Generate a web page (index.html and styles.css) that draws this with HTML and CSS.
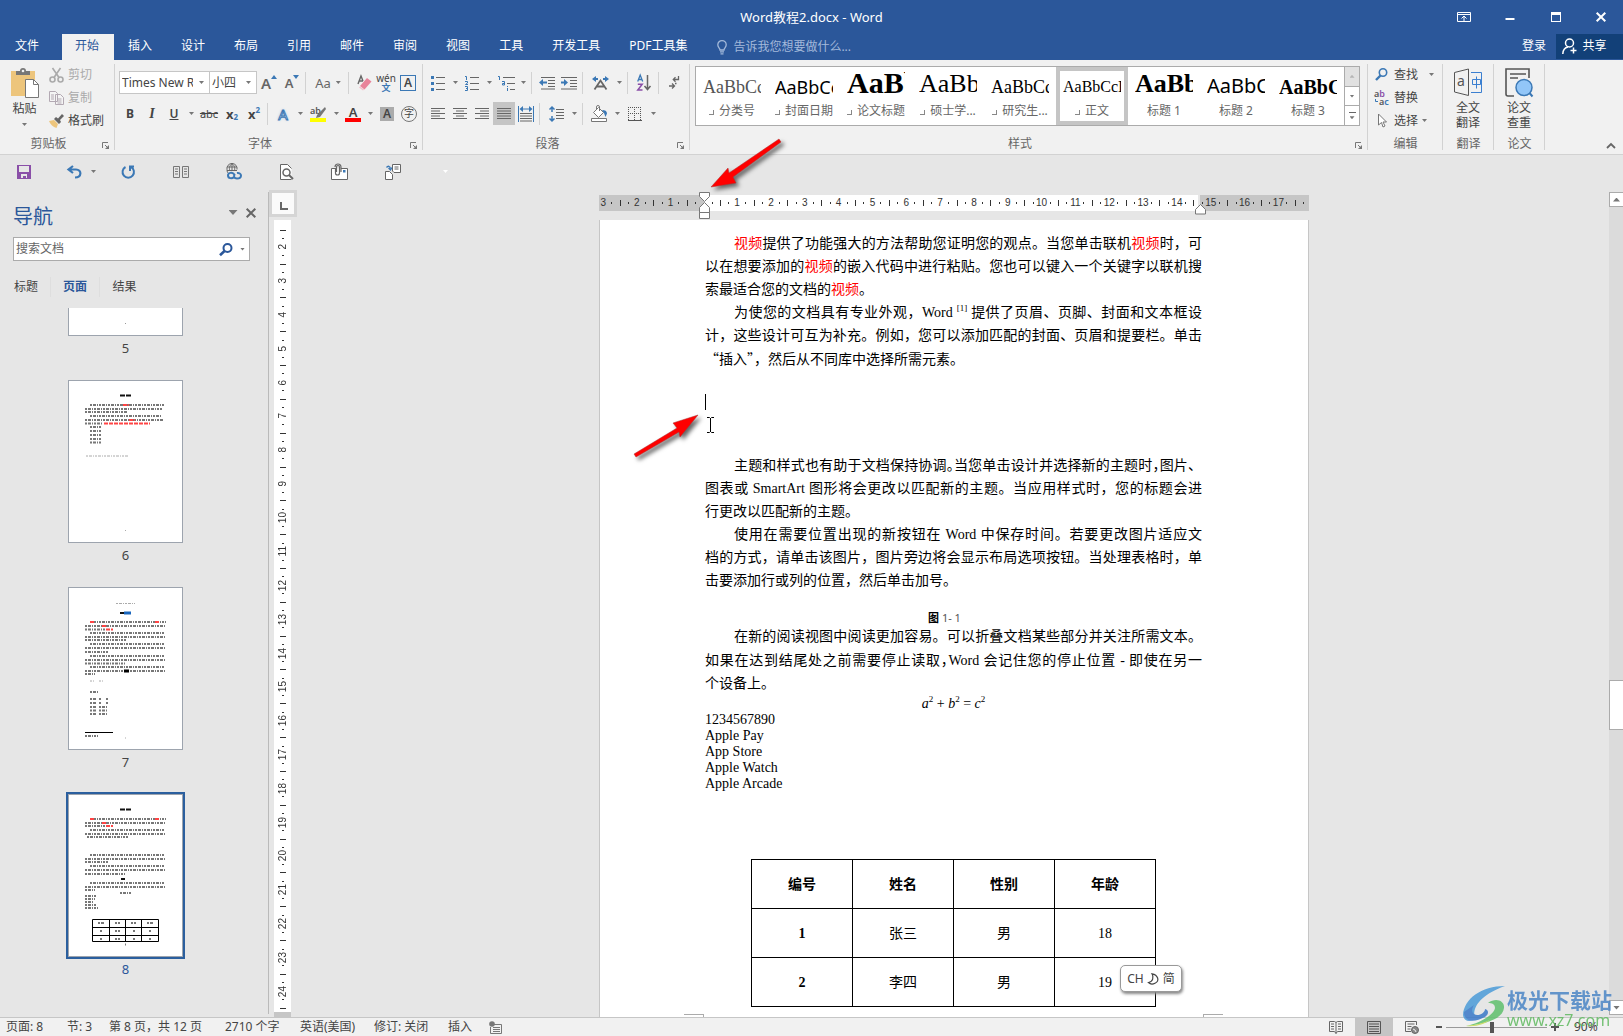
FILE: index.html
```html
<!DOCTYPE html>
<html lang="zh-CN">
<head>
<meta charset="utf-8">
<title>Word教程2.docx - Word</title>
<link rel="stylesheet" href="styles.css">
</head>
<body>
<header class="titlebar">
  <h1 class="title">Word教程2.docx - Word</h1>
  <div class="window-buttons">
    <button type="button" aria-label="功能区显示选项"><svg width="14" height="12" viewBox="0 0 14 12" fill="none" stroke="#fff"><path d="M.5 1.5h13v9H.5zM0 3.5h14M7 10V5.500M4.500 7.500L7 5l2.500 2.500" /></svg></button>
    <button type="button" aria-label="最小化"><svg width="10" height="12" viewBox="0 0 10 12"><path fill="#fff" d="M.5 7h9v2h-9z"/></svg></button>
    <button type="button" aria-label="最大化"><svg width="10" height="10" viewBox="0 0 10 10"><path fill="#fff" fill-rule="evenodd" d="M0 0h10v10H0zM1 3v6h8V3z"/></svg></button>
    <button type="button" aria-label="关闭"><svg width="10" height="10" viewBox="0 0 10 10" stroke="#fff" stroke-width="2"><path d="M.7.7l8.600 8.600M9.300.7L.7 9.300"/></svg></button>
  </div>
</header>
<nav class="tabs">
  <button type="button" class="tab file">文件</button>
  <button type="button" class="tab active">开始</button>
  <button type="button" class="tab">插入</button>
  <button type="button" class="tab">设计</button>
  <button type="button" class="tab">布局</button>
  <button type="button" class="tab">引用</button>
  <button type="button" class="tab">邮件</button>
  <button type="button" class="tab">审阅</button>
  <button type="button" class="tab">视图</button>
  <button type="button" class="tab">工具</button>
  <button type="button" class="tab">开发工具</button>
  <button type="button" class="tab">PDF工具集</button>
  <button type="button" class="tell-me"><svg width="10" height="15" viewBox="0 0 10 15" fill="none" stroke="#a3b9da" stroke-width="1.300"><path d="M3 10C3 8 .8 7.500.8 4.800a4.200 4.200 0 0 1 8.400 0C9.200 7.500 7 8 7 10zM3 11.800h4M3.500 13.800h3"/></svg>告诉我您想要做什么...</button>
  <button type="button" class="sign-in">登录</button>
  <button type="button" class="share"><svg width="15" height="16" viewBox="0 0 15 16" fill="none" stroke="#fff" stroke-width="1.500"><circle cx="7.500" cy="5" r="4"/><path d="M.8 16C1 11.500 3 9.500 6 9M11.500 9.500v6M8.500 12.500h6"/></svg>共享</button>
</nav>

<section class="ribbon">
  <div class="group clipboard">
    <div class="group-body">
      <button type="button" class="big"><svg width="28" height="30" viewBox="0 0 28 30"><path fill="#edc57c" d="M0 3h24v25H0z"/><path fill="#777" d="M5 7V3h4a3 3 0 0 1 6 0h4v4z"/><circle cx="12" cy="3" r="1.300" fill="#f1f1f1"/><path fill="#fff" stroke="#777" d="M14.500 11.500h8l5 5v13h-13z"/><path fill="none" stroke="#777" d="M22.500 11.500v5h5"/></svg><span>粘贴</span><i class="caret"></i></button>
      <div class="stack">
        <button type="button" class="cmd off"><svg width="15" height="16" viewBox="0 0 15 16" fill="none" stroke="#aaa" stroke-width="1.600"><path d="M3.500 1l6.500 9.500M11.500 1L5 10.500"/><circle cx="3.500" cy="12.500" r="2.500"/><circle cx="11.500" cy="12.500" r="2.500"/></svg>剪切</button>
        <button type="button" class="cmd off"><svg width="15" height="14" viewBox="0 0 15 14" fill="#f4f4f4" stroke="#b3a9b3"><path d="M.5.5h6l2 2v8h-8zM6.500 3.500h5l3 3v7h-8z"/><path d="M2 4h3M2 6h3M2 8h3M8.500 8h4M8.500 10h4M8.500 12h4"/></svg>复制</button>
        <button type="button" class="cmd"><svg width="15" height="14" viewBox="0 0 15 14"><path fill="#edc57c" d="M0 7l5-1 4 4-1.500 4C4 13 1.500 10.500 0 7z"/><path fill="#666" d="M5 5l2-2 2 1.500L13 0l2 2-4 4 1 2-2 2z"/></svg>格式刷</button>
      </div>
    </div>
    <div class="group-label"><span>剪贴板</span><button type="button" class="launcher" aria-label="剪贴板选项"><svg width="8" height="8" viewBox="0 0 8 8"><path fill="none" stroke="#777" d="M.5 6V.5H6M3 3l3 3"/><path fill="#777" d="M7 3v4H3z"/></svg></button></div>
  </div>

  <div class="group font">
    <div class="group-body rows">
      <div class="row">
        <label class="combo face"><select aria-label="字体"><option>Times New Roman</option></select><i class="caret"></i></label>
        <label class="combo size"><select aria-label="字号"><option>小四</option></select><i class="caret"></i></label>
        <button type="button" class="b24 glyph">A<svg class="tip" width="6" height="4" viewBox="0 0 6 4"><path fill="#3b78b5" d="M0 4l3-4 3 4z"/></svg></button>
        <button type="button" class="b22 glyph small">A<svg class="tip" width="6" height="4" viewBox="0 0 6 4"><path fill="#3b78b5" d="M0 0h6L3 4z"/></svg></button>
        <i class="sep"></i>
        <button type="button" class="b36">Aa<i class="caret"></i></button>
        <i class="sep"></i>
        <button type="button" class="b22" aria-label="清除格式"><svg width="15" height="16" viewBox="0 0 15 16"><path fill="none" stroke="#666" stroke-width="1.400" d="M1 9l3-8 2 5M2 6h4"/><path fill="#e8839a" d="M3 11l7-8 4.500 3.500-7 8z"/><path fill="#f4c0cb" d="M2 12.500l1-1 4 3-1 1z"/></svg></button>
        <button type="button" class="b22 pinyin">wén<b>文</b></button>
        <button type="button" class="b22"><span class="boxed">A</span></button>
      </div>
      <div class="row">
        <button type="button" class="b22 bold">B</button>
        <button type="button" class="b22 ital">I</button>
        <button type="button" class="b22 under">U</button><i class="caret c12"></i>
        <button type="button" class="b24 strike">abc</button>
        <button type="button" class="b22 bold script">x<sub>2</sub></button>
        <button type="button" class="b22 bold script">x<sup>2</sup></button>
        <i class="sep"></i>
        <button type="button" class="b22 effect">A</button><i class="caret c12"></i>
        <button type="button" class="b24" aria-label="突出显示"><svg width="16" height="16" viewBox="0 0 16 16"><text x="0" y="8" class="svg-ab">ab</text><path fill="#777" d="M15 1l1 2-6 8-4 1 1-3z"/><path fill="#ff0" d="M0 12h16v4H0z"/></svg></button><i class="caret c12"></i>
        <button type="button" class="b22"><span class="color">A</span></button><i class="caret c12"></i>
        <button type="button" class="b22"><span class="shade">A</span></button>
        <button type="button" class="b22"><span class="ring">字</span></button>
      </div>
    </div>
    <div class="group-label"><span>字体</span><button type="button" class="launcher" aria-label="字体选项"><svg width="8" height="8" viewBox="0 0 8 8"><path fill="none" stroke="#777" d="M.5 6V.5H6M3 3l3 3"/><path fill="#777" d="M7 3v4H3z"/></svg></button></div>
  </div>

  <div class="group para">
    <div class="group-body rows">
      <div class="row">
        <button type="button" class="b22" aria-label="项目符号"><svg width="14" height="16" viewBox="0 0 14 16"><path stroke="#666" d="M5 2.500h9M5 8.500h9M5 14.500h9"/><path fill="#3b78b5" d="M0 1h3v3H0zM0 7h3v3H0zM0 13h3v3H0z"/></svg></button><i class="caret c12"></i>
        <button type="button" class="b22" aria-label="编号"><svg width="14" height="16" viewBox="0 0 14 16"><path stroke="#666" d="M5 2.500h9M5 8.500h9M5 14.500h9"/><path fill="none" stroke="#3b78b5" d="M0 1.500h1.500V5M0 6.500h2.500v1.500L.5 9.500H3M0 11.500h2.500v4H0M1 13.500h1.500"/></svg></button><i class="caret c12"></i>
        <button type="button" class="b22" aria-label="多级列表"><svg width="17" height="16" viewBox="0 0 17 16"><path stroke="#666" d="M5 2.500h12M9 8.500h8M12 14.500h5"/><path fill="none" stroke="#3b78b5" d="M0 1.500h1.500V5M4 6.500h2.500v3.500H4.500V8.500H6M9.500 11v1M9.500 13v3"/></svg></button><i class="caret c12"></i>
        <i class="sep"></i>
        <button type="button" class="b22" aria-label="减少缩进"><svg width="16" height="14" viewBox="0 0 16 14"><path stroke="#666" d="M2 1.500h14M9 4.500h7M9 7.500h7M9 10.500h7M2 13h14"/><path fill="#3b78b5" d="M0 6.500L4 3v2.500h4v2H4V10z"/></svg></button>
        <button type="button" class="b22" aria-label="增加缩进"><svg width="16" height="14" viewBox="0 0 16 14"><path stroke="#666" d="M0 1.500h16M9 4.500h7M9 7.500h7M9 10.500h7M0 13h16"/><path fill="#3b78b5" d="M7 6.500L3 3v2.500H0v2h3V10z"/></svg></button>
        <i class="sep"></i>
        <button type="button" class="b26" aria-label="中文版式"><svg width="17" height="14" viewBox="0 0 17 14"><path fill="none" stroke="#666" stroke-width="1.800" d="M2.500 13.500l6-9 6 9M5 10.500h7"/><path fill="#3b78b5" d="M0 3l4-3v2h2v2H4v2zM17 3l-4-3v2h-2v2h2v2z"/></svg></button><i class="caret c12"></i>
        <i class="sep"></i>
        <button type="button" class="b24" aria-label="排序"><svg width="14" height="16" viewBox="0 0 14 16"><path fill="none" stroke="#3b78b5" stroke-width="1.300" d="M.7 6.500L3.200 0l2.500 6.500M1.500 4.500h3.500"/><path fill="none" stroke="#8a4fa8" stroke-width="1.500" d="M.8 9.300h4.400L.8 15h4.700"/><path fill="none" stroke="#666" stroke-width="1.500" d="M10.500 0v14M7.500 11l3 3.500 3-3.500"/></svg></button>
        <i class="sep"></i>
        <button type="button" class="b22" aria-label="显示编辑标记"><svg width="11" height="13" viewBox="0 0 11 13"><path fill="none" stroke="#666" stroke-width="1.300" d="M9.500 0v3.500H4.500M6.500 1.300L4.300 3.500l2.200 2.200M0 10h5.500M3 7.500L5.500 10 3 12.500M7.500 7.500h-1.500"/></svg></button>
      </div>
      <div class="row">
        <button type="button" class="b22" aria-label="左对齐"><svg width="14" height="11" viewBox="0 0 14 11" stroke="#666"><path d="M0 .5h14M0 3h9M0 5.500h14M0 8h9M0 10.500h14"/></svg></button>
        <button type="button" class="b22" aria-label="居中"><svg width="14" height="11" viewBox="0 0 14 11" stroke="#666"><path d="M0 .5h14M3 3h8M0 5.500h14M3 8h8M0 10.500h14"/></svg></button>
        <button type="button" class="b22" aria-label="右对齐"><svg width="14" height="11" viewBox="0 0 14 11" stroke="#666"><path d="M0 .5h14M5 3h9M0 5.500h14M5 8h9M0 10.500h14"/></svg></button>
        <button type="button" class="b22 on" aria-label="两端对齐"><svg width="14" height="11" viewBox="0 0 14 11" stroke="#666"><path d="M0 .5h14M0 3h14M0 5.500h14M0 8h14M0 10.500h14"/></svg></button>
        <button type="button" class="b22" aria-label="分散对齐"><svg width="16" height="16" viewBox="0 0 16 16"><path stroke="#3b78b5" d="M.5 0v16M15.500 0v16M3 3h10"/><path fill="#3b78b5" d="M1.500 3L5 0v6zM14.500 3L11 0v6z"/><path stroke="#666" d="M2 7.500h12M2 10h12M2 12.500h12M2 15h12"/></svg></button>
        <i class="sep"></i>
        <button type="button" class="b24" aria-label="行距"><svg width="15" height="16" viewBox="0 0 15 16"><path stroke="#666" d="M7 3.500h8M7 6.500h8M7 9.500h8M7 12.500h8"/><path stroke="#3b78b5" stroke-width="1.500" fill="none" d="M3 1v5M3 10v5M.5 3.500L3 1l2.500 2.500M.5 12.500L3 15l2.500-2.500"/></svg></button><i class="caret c12"></i>
        <i class="sep"></i>
        <button type="button" class="b24" aria-label="底纹"><svg width="17" height="16" viewBox="0 0 17 16"><path fill="#fff" stroke="#777" d="M2.500 6.500l5-5 5 5-5 5zM5.500 4V1a1.500 1.500 0 0 1 3 0v4"/><path fill="#3b78b5" d="M11 4c3 0 5 1 5 3.500L14.500 11 13 7z"/><path fill="#fff" stroke="#777" d="M.5 12.500h15v3H.5z"/></svg></button><i class="caret c12"></i>
        <button type="button" class="b24" aria-label="边框"><svg width="14" height="14" viewBox="0 0 14 14"><path stroke="#555" stroke-dasharray="1 1" d="M0 .5h14M0 6.500h14M.5 0v13M6.500 0v13M12.500 0v13"/><path stroke="#555" d="M0 13.500h14"/></svg></button><i class="caret c12"></i>
      </div>
    </div>
    <div class="group-label"><span>段落</span><button type="button" class="launcher" aria-label="段落选项"><svg width="8" height="8" viewBox="0 0 8 8"><path fill="none" stroke="#777" d="M.5 6V.5H6M3 3l3 3"/><path fill="#777" d="M7 3v4H3z"/></svg></button></div>
  </div>

  <div class="group styles">
    <div class="group-body">
      <div class="gallery">
        <div class="gallery-items">
          <button type="button" class="style"><span class="pv s1">AaBbCc</span><span class="nm"><i class="mark"></i>分类号</span></button>
          <button type="button" class="style"><span class="pv s2">AaBbCc</span><span class="nm"><i class="mark"></i>封面日期</span></button>
          <button type="button" class="style"><span class="pv s3">AaBb</span><span class="nm"><i class="mark"></i>论文标题</span></button>
          <button type="button" class="style"><span class="pv s4">AaBb</span><span class="nm"><i class="mark"></i>硕士学...</span></button>
          <button type="button" class="style"><span class="pv s5">AaBbCc</span><span class="nm"><i class="mark"></i>研究生...</span></button>
          <button type="button" class="style picked"><span class="pv s6">AaBbCcI</span><span class="nm"><i class="mark"></i>正文</span></button>
          <button type="button" class="style"><span class="pv s7">AaBb</span><span class="nm">标题 1</span></button>
          <button type="button" class="style"><span class="pv s8">AaBbC</span><span class="nm">标题 2</span></button>
          <button type="button" class="style"><span class="pv s9">AaBbC</span><span class="nm">标题 3</span></button>
        </div>
        <div class="gallery-scroll">
          <button type="button" class="dim" aria-label="上一行"><i class="caret up"></i></button>
          <button type="button" aria-label="下一行"><i class="caret"></i></button>
          <button type="button" class="more" aria-label="其他"><i class="caret"></i></button>
        </div>
      </div>
    </div>
    <div class="group-label"><span>样式</span><button type="button" class="launcher" aria-label="样式选项"><svg width="8" height="8" viewBox="0 0 8 8"><path fill="none" stroke="#777" d="M.5 6V.5H6M3 3l3 3"/><path fill="#777" d="M7 3v4H3z"/></svg></button></div>
  </div>

  <div class="group edit">
    <div class="group-body">
      <div class="stack">
        <button type="button" class="cmd"><svg width="16" height="13" viewBox="0 0 16 13" fill="none" stroke="#3b78b5"><circle cx="9" cy="4.500" r="3.700" stroke-width="1.600"/><path stroke-width="2.400" d="M6.500 7.500L2 12"/></svg>查找<i class="caret far"></i></button>
        <button type="button" class="cmd"><svg width="16" height="16" viewBox="0 0 16 16"><text x="0" y="7" class="svg-ab">a<tspan fill="#8a4fa8">b</tspan></text><text x="5" y="15" class="svg-ab">a<tspan fill="#3b78b5">c</tspan></text><path fill="none" stroke="#3b78b5" d="M1.500 9v2.500H4"/></svg>替换</button>
        <button type="button" class="cmd"><svg width="16" height="15" viewBox="0 0 16 15"><path fill="#fff" stroke="#777" d="M4.500 1v11l3-2.500L9 14l2-1-2-4h3.500z"/></svg>选择<i class="caret near"></i></button>
      </div>
    </div>
    <div class="group-label"><span>编辑</span></div>
  </div>

  <div class="group tool">
    <div class="group-body"><button type="button" class="big"><svg width="28" height="29" viewBox="0 0 28 29" fill="none"><path stroke="#555" d="M.5 4.500l14-3.500v26.500L.5 24z"/><path stroke="#3b7fd0" d="M17 4.500h10.500v20H17M18.500 11.500h8v5h-8zM22.500 8.500v12"/><text x="3" y="18" class="svg-a">a</text></svg><span>全文<br>翻译</span></button></div>
    <div class="group-label"><span>翻译</span></div>
  </div>
  <div class="group tool">
    <div class="group-body"><button type="button" class="big"><svg width="28" height="29" viewBox="0 0 28 29" fill="none"><path stroke="#555" stroke-width="1.600" d="M9 28H3a2 2 0 0 1-2-2V1h23v9M5 6h16M5 10h8"/><circle cx="19" cy="19.500" r="8" fill="#92c6f8" stroke="#3b78b5" stroke-width="1.500"/><path stroke="#3b78b5" stroke-width="2" d="M24.500 25l3 3.500"/></svg><span>论文<br>查重</span></button></div>
    <div class="group-label"><span>论文</span></div>
  </div>
  <div class="ribbon-end"><button type="button" aria-label="折叠功能区"><svg width="10" height="6" viewBox="0 0 10 6"><path fill="none" stroke="#666" stroke-width="1.800" d="M1 5l4-4 4 4"/></svg></button></div>
</section>

<div class="quick">
  <button type="button" aria-label="保存"><svg width="14" height="14" viewBox="0 0 14 14"><path fill="#8a4fa8" fill-rule="evenodd" d="M0 0h14v14H0zM2 1v6h10V1zM4 9v4h2v-2h3v2h1V9z"/></svg></button>
  <button type="button" class="undo" aria-label="撤消"><svg width="15" height="14" viewBox="0 0 15 14" fill="none" stroke="#3b78b5" stroke-width="2.200"><path d="M6 1L1.500 4.500 6 8M2 4.500h7c6 0 6 8-1 8"/></svg><i class="caret"></i></button>
  <button type="button" aria-label="重复"><svg width="14" height="14" viewBox="0 0 14 14" fill="none" stroke="#3b78b5" stroke-width="2"><path d="M4.500 2A5.700 5.700 0 1 0 10 2M9 6V1.500h4"/></svg></button>
  <button type="button" aria-label="并排"><svg width="16" height="12" viewBox="0 0 16 12" fill="none" stroke="#777"><path d="M.5.500h6v11h-6zM9.500.500h6v11h-6zM2 3h3M2 5.500h3M2 8h3M11 3h3M11 5.500h3M11 8h3"/></svg></button>
  <button type="button" aria-label="超链接"><svg width="16" height="17" viewBox="0 0 16 17" fill="none"><path stroke="#666" d="M6 .5a5 5 0 0 0-5 6c0 2 .5 3 1.500 4M6 .5a5 5 0 0 1 5 6M1 4h10M1 7.500h10M6 .5v7M6 .5C3 3 3 6 4 8M6 .5c3 2.500 3 5 2.500 7"/><path stroke="#3b78b5" stroke-width="2" d="M8 11C6 9 2 9.500 2 12.500S6 16 8 14M9 11c-2 2-1 4.500 2 4.500s4-1.500 4-3S13 9.500 11 10"/></svg></button>
  <button type="button" aria-label="打印预览"><svg width="15" height="16" viewBox="0 0 15 16" fill="none" stroke="#666"><path fill="#fff" d="M12.500 15.500H1.500V.5h7l4 4"/><circle cx="7.500" cy="8.500" r="3.500" stroke-width="1.500"/><path stroke-width="2" d="M10 11l4 4"/></svg></button>
  <button type="button" aria-label="附件"><svg width="17" height="16" viewBox="0 0 17 16" fill="none" stroke="#666"><path fill="#fff" d="M4 4.500H.5v11h16v-11H10"/><path stroke-width="1.200" d="M4.500 4v5a2 2 0 0 0 4 0V3a1.500 1.500 0 0 0-3 0v5M10 8V3c0-4-6-4-6 0"/><path fill="#3b78b5" stroke="none" d="M12 6h2.500v2.500H12z"/></svg></button>
  <button type="button" aria-label="转换"><svg width="17" height="16" viewBox="0 0 17 16" fill="none" stroke="#666"><path fill="#fff" d="M1.500 7.500h4l3 3v5h-7zM8.500.5h8v8H10L8.500 7z"/><path d="M10.500 3h4M10.500 5h4"/><path stroke="#3b78b5" stroke-width="1.300" d="M2.500 3.500C4 1.500 6 2 6.500 4.500M4.500 4L6.500 6l1.500-2.500"/></svg></button>
  <button type="button" class="faint" aria-label="自定义"><i class="caret"></i></button>
</div>

<main class="work">
  <aside class="nav">
    <div class="nav-head"><h2>导航</h2><button type="button" aria-label="选项"><i class="caret large"></i></button><button type="button" aria-label="关闭导航"><svg width="10" height="10" viewBox="0 0 10 10" stroke="#666" stroke-width="2"><path d="M.7.7l8.600 8.600M9.300.7L.7 9.300"/></svg></button></div>
    <div class="search"><input type="text" aria-label="搜索文档" placeholder="搜索文档"><button type="button" aria-label="搜索"><svg width="14" height="13" viewBox="0 0 14 13" fill="none" stroke="#2b579a"><circle cx="8.500" cy="5" r="4" stroke-width="2"/><path stroke-width="2.600" d="M5.500 8L1 12.300"/></svg></button><i class="caret"></i></div>
    <div class="nav-tabs"><button type="button">标题</button><button type="button" class="active">页面</button><button type="button">结果</button></div>
    <div class="pages">
      <div class="thumb cut"><svg viewBox="0 0 113 28"><path stroke="#999" d="M56 15.500h1"/></svg></div><span class="no">5</span>
      <div class="thumb"><svg viewBox="0 0 113 161">
        <path class="h" d="M51 14.500h11"/>
        <path class="t" d="M21 24h74M16 28h77M16 31h43M21 35h71M16 39h78M16 42.500h18M21 46h11M21 50h11M21 54h11M21 58h11M21 61.500h11"/>
        <path class="r" d="M54 24h6M60 39h6M35 42.500h46"/><path class="g" d="M17 75h42M56 149.500h1"/>
      </svg></div><span class="no">6</span>
      <div class="thumb"><svg viewBox="0 0 113 161">
        <path class="g" d="M47 15.500h19M21 93h4M30 93h4M56 150h1"/><path class="h" d="M51 25h5"/><path fill="#1a66bd" d="M55 23.500h7v3h-7z"/>
        <path class="t" d="M21 34h76M16 38h80M16 41.500h20M21 45h75M16 49h81M16 52h41M21 56h75M16 60h80M16 64h23M21 68h75M16 72h80M16 75.500h40M21 79h75M16 83h80M16 86h10M21 104h9M21 111h6M30 111h3M37 111h2M21 115h6M30 115h3M37 115h2M21 119h6M30 119h9M21 122.500h6M30 122.500h9M21 126h6M30 126h9M16 148h13"/>
        <path class="r" d="M21 34h5M86 34h5M33 38h5M37 41.500h7"/><path stroke="#000" d="M16 144.500h28"/><path fill="#000" d="M55 81.500h5v3h-5z"/>
      </svg></div><span class="no">7</span>
      <div class="thumb current"><svg viewBox="0 0 113 161">
        <path class="h" d="M51 14.500h11M52 84h4"/>
        <path class="t" d="M21 24h76M16 28h80M16 31h20M21 35h75M16 39h81M18 42h41M21 60h75M16 64h80M16 67h23M21 71h75M16 75h80M16 79h40M21 88h75M16 92h80M16 95h10M51 98h11M16 101h12M16 104h10M16 107h9M16 110h12M16 113h13"/>
        <path class="r" d="M21 24h5M86 24h5M33 28h5M37 31h7"/>
        <path fill="none" stroke="#000" d="M23.500 124.500h66v22h-66zM23.500 132.500h66M23.500 140.500h66M40.500 124v22M56.500 124v22M72.500 124v22"/>
        <path class="t" d="M29 128h6M46 128h5M62 128h5M78 128h6M31 136h2M46 136h5M64 136h2M80 136h3M31 144h2M46 144h5M64 144h2M80 144h3M56 149.500h1"/>
      </svg></div><span class="no sel">8</span>
    </div>
  </aside>
  <div class="gutter"><div class="corner"><i></i></div><div class="vruler" id="vruler"></div><div class="vruler-end"></div></div>
  <div class="canvas">
    <div class="hruler">
      <div class="zone left" id="hleft"></div>
      <div class="zone body" id="hbody"></div>
      <svg class="indent" width="12" height="29" viewBox="0 0 12 29"><path fill="#fff" stroke="#777" d="M.5.5h10v4l-5 5-5-5zM.5 20.500v-5l5-5 5 5v5zM.5 20.500h10v6h-10z"/></svg>
      <svg class="indent-right" width="12" height="11" viewBox="0 0 12 11"><path fill="#fff" stroke="#777" d="M.5 10V5.500l5-5 5 5V10z"/></svg>
    </div>
    <article class="sheet">
      <p><span class="ln in"><em>视频</em>提供了功能强大的方法帮助您证明您的观点。当您单击联机<em>视频</em>时，可</span><span class="ln">以在想要添加的<em>视频</em>的嵌入代码中进行粘贴。您也可以键入一个关键字以联机搜</span><span class="ln end">索最适合您的文档的<em>视频</em>。</span></p>
      <p><span class="ln in">为使您的文档具有专业外观，Word <sup>[1]</sup> 提供了页眉、页脚、封面和文本框设</span><span class="ln">计，这些设计可互为补充。例如，您可以添加匹配的封面、页眉和提要栏。单击</span><span class="ln end cjk">“插入”，然后从不同库中选择所需元素。</span></p>
      <div class="blank"><i class="cursor"></i><svg class="ibeam" width="9" height="16" viewBox="0 0 9 16"><path fill="none" stroke="#000" d="M1 .5h2.500l1 1 1-1H8M4.500 1v14M1 15.500h2.500l1-1 1 1H8"/></svg></div>
      <p><span class="ln in">主题和样式也有助于文档保持协调<span class="half">。</span>当您单击设计并选择新的主题时<span class="half">，</span>图片、</span><span class="ln">图表或 SmartArt 图形将会更改以匹配新的主题。当应用样式时，您的标题会进</span><span class="ln end">行更改以匹配新的主题。</span></p>
      <p><span class="ln in">使用在需要位置出现的新按钮在 Word 中保存时间。若要更改图片适应文</span><span class="ln">档的方式，请单击该图片，图片旁边将会显示布局选项按钮。当处理表格时，单</span><span class="ln end">击要添加行或列的位置，然后单击加号。</span></p>
      <p class="caption"><b>图</b> 1- 1</p>
      <p><span class="ln in">在新的阅读视图中阅读更加容易。可以折叠文档某些部分并关注所需文本。</span><span class="ln">如果在达到结尾处之前需要停止读取<span class="half">，</span>Word 会记住您的停止位置 - 即使在另一</span><span class="ln end">个设备上。</span></p>
      <p class="formula"><i>a</i><sup>2</sup> + <i>b</i><sup>2</sup> = <i>c</i><sup>2</sup></p>
      <p class="list">1234567890<br>Apple Pay<br>App Store<br>Apple Watch<br>Apple Arcade</p>
      <table class="grid">
        <tr><th>编号</th><th>姓名</th><th>性别</th><th>年龄</th></tr>
        <tr><th>1</th><td>张三</td><td>男</td><td>18</td></tr>
        <tr><th>2</th><td>李四</td><td>男</td><td>19</td></tr>
      </table>
      <div class="crops"><i></i><i></i></div>
      <div class="ime">CH<svg width="11" height="12" viewBox="0 0 11 12" fill="none" stroke="#444" stroke-width="1.200"><path d="M4 .8c6 1 8 7 3 9.500-2 1-5 .8-6.500-.8C5 9 6 4 4 .8z"/></svg>简</div>
    </article>
  </div>
  <div class="scroll"><button type="button" aria-label="向上滚动"><i class="caret up"></i></button><i class="above"></i><i class="bar"></i><i class="below"></i><button type="button" aria-label="向下滚动"><i class="caret"></i></button></div>
</main>

<footer class="status">
  <span class="st1">页面: 8</span><span class="st2">节: 3</span><span class="st3">第 8 页，共 12 页</span><span class="st4">2710 个字</span><span class="st5">英语(美国)</span><span class="st6">修订: 关闭</span><span class="st7">插入</span>
  <svg width="13" height="13" viewBox="0 0 13 13"><path fill="none" stroke="#777" d="M5 3.500h7.500v9H1.500V6M4 6.500h7M4 8.500h7M4 10.500h7"/><circle cx="3" cy="3" r="2.800" fill="#777"/></svg>
  <div class="views">
    <button type="button" aria-label="阅读视图"><svg width="14" height="13" viewBox="0 0 14 13" fill="none" stroke="#666"><path d="M.5.500h5l1.500 1 1.500-1h5v10h-5L7 12.500l-1.500-2h-5zM7 1.500v11M2 3h3M2 5.500h3M2 8h3M9 3h3M9 5.500h3M9 8h3"/></svg></button>
    <button type="button" class="on" aria-label="页面视图"><svg width="14" height="13" viewBox="0 0 14 13" fill="none" stroke="#555"><path d="M.5.500h13v12H.5zM2 3h10M2 5.500h10M2 8h10M2 10.500h10"/></svg></button>
    <button type="button" aria-label="Web 版式视图"><svg width="14" height="13" viewBox="0 0 14 13" fill="none" stroke="#666"><path d="M6 10.500H.5V.500h11V4M2.500 3h7M2.500 5.500h4M2.500 8h3"/><circle cx="10" cy="9" r="3.500" fill="#888"/><path stroke="#eee" d="M8 8l2 1 1 2"/></svg></button>
  </div>
  <div class="zoom"><button type="button" aria-label="缩小"><svg width="6" height="2"><path fill="#555" d="M0 0h6v2H0z"/></svg></button><input type="range" min="0" max="100" value="45" aria-label="显示比例"><button type="button" aria-label="放大"><svg width="8" height="8"><path fill="#555" d="M3 0h2v3h3v2H5v3H3V5H0V3h3z"/></svg></button><span class="pct">90%</span></div>
</footer>

<svg class="arrow one" width="90" height="64" viewBox="0 0 90 64"><path d="M2 50L19 31l1 5L70 2l2 3L24 40l3 6z"/></svg>
<svg class="arrow two" width="80" height="54" viewBox="0 0 80 54"><path d="M66 2L41 10l4 5L2 41l2 3 43-25 1 5z"/></svg>
<div class="brand">
  <svg width="42" height="41" viewBox="0 0 42 41"><path fill="#4b9bd8" d="M42 0C18 0 1 13 0 29c1 7 7 7 12 4C8 20 20 8 42 0z"/><path fill="#3a78c8" d="M1 26c0 10 10 11 21 5 4-3 4-7 0-8 0 4-7 8-11 5-3-2-2-6 0-9z"/><path fill="#5fc06d" d="M25 17c8-6 17-2 16 5-1 10-16 16-38 18 14-3 28-11 29-18 0-4-3-5-7-5z"/><path fill="#c9d94f" d="M3 40c10-1 18-3 25-7-6 5-14 8-25 7z"/></svg>
  <div><b>极光下载站</b><a href="#">www.xz7.com</a></div>
</div>
<script src="rulers.js"></script>
</body>
</html>
```
FILE: styles.css
```css
* { box-sizing: border-box; }
body { margin: 0; height: 100vh; display: flex; flex-direction: column; overflow: hidden; position: relative; background: #e6e6e6; color: #444; font: 12px/16px "Noto Sans", "Noto Sans CJK SC", sans-serif; }
button { margin: 0; padding: 0; border: 0; background: none; color: inherit; font: inherit; display: flex; align-items: center; justify-content: center; white-space: nowrap; flex: none; }
svg { flex: none; display: block; overflow: visible; }
h1, h2, p { margin: 0; }

.caret { flex: none; width: 5px; height: 3px; background: #777; clip-path: polygon(0 0, 100% 0, 50% 100%); }
.caret.up { clip-path: polygon(50% 0, 100% 100%, 0 100%); }
.caret.large { width: 9px; height: 5px; }
.caret.c12 { margin: 0 3px 0 4px; }

.titlebar { height: 34px; flex: none; display: grid; grid-template-columns: 1fr auto 1fr; align-items: center; background: #2b579a; color: #fff; }
.title { grid-column: 2; font-size: 13px; font-weight: 400; }
.window-buttons { display: flex; justify-content: flex-end; height: 32px; }
.window-buttons button { width: 46px; }
.window-buttons button:last-child { width: 44px; padding-right: 0; }

.tabs { height: 26px; flex: none; display: flex; gap: 1px; background: #2b579a; color: #fff; }
.tab { padding: 0 15px 3px 13px; }
.tab.file { width: 61px; padding-right: 20px; }
.tab.active { background: #f1f1f1; color: #2b579a; }
.tell-me { padding: 0 0 0 14px; gap: 6px; color: #a3b9da; }
.sign-in { margin-left: auto; padding: 0 9px 3px; }
.share { width: 67px; height: 25px; gap: 5px; padding-right: 10px; padding-bottom: 2px; background: #124078; }

.ribbon { height: 95px; flex: none; display: flex; background: #f1f1f1; border-bottom: 1px solid #d2d2d2; }
.group { display: flex; flex-direction: column; flex: none; position: relative; padding-top: 3px; }
.group::after { content: ""; position: absolute; right: 0; top: 4px; bottom: 4px; width: 1px; background: #d2d2d2; }
.group-body { flex: 1; display: flex; }
.group-label { height: 20px; display: flex; align-items: center; color: #666; }
.group-label span { flex: 1; text-align: center; }
.launcher { width: 18px; height: 12px; align-self: flex-end; margin-bottom: 2px; }
.clipboard { width: 115px; }
.font { width: 308px; }
.para { width: 267px; }
.styles { flex: 1; min-width: 0; }
.edit { width: 75px; }
.tool { width: 51px; }
.ribbon-end { flex: none; width: 78px; display: flex; align-items: flex-end; justify-content: flex-end; padding: 0 7px 5px 0; }
.big { width: 49px; flex-direction: column; justify-content: flex-start; padding-top: 5px; gap: 3px; line-height: 15px; }
.big .caret { margin-top: 4px; }
.tool .big { width: 50px; }
.stack { display: flex; flex-direction: column; }
.cmd { height: 23px; gap: 4px; justify-content: flex-start; }
.cmd.off { color: #aaa; }
.cmd .far { margin-left: 7px; }
.edit .cmd { padding-left: 6px; }
.rows { flex-direction: column; padding: 7px 0 0 4px; gap: 6px; }
.row { display: flex; align-items: center; height: 25px; }
.row button { height: 23px; }
.b22 { width: 22px; }
.b24 { width: 24px; }
.b26 { width: 26px; }
.b36 { width: 36px; gap: 5px; font-size: 13px; color: #666; }
.on { background: #c5c5c5; }
.sep { width: 1px; height: 22px; margin: 0 4px 0 2px; background: #d2d2d2; }
.combo { display: flex; align-items: center; position: relative; height: 23px; border: 1px solid #c6c6c6; background: #fff; }
.combo select { width: 100%; height: 100%; padding: 0 16px 0 2px; border: 0; background: none; appearance: none; font: inherit; color: #444; overflow: hidden; text-overflow: clip; }
.combo .caret { position: absolute; right: 5px; }
.face { width: 91px; }
.size { width: 48px; margin-left: -1px; }
.glyph { font-size: 15px; color: #666; font-weight: 600; padding-top: 1px; }
.glyph.small { font-size: 13px; }
.tip { align-self: flex-start; margin-top: 3px; }
.pinyin { flex-direction: column; font-size: 10px; line-height: 10px; }
.pinyin b { font-size: 9px; line-height: 9px; color: #3b78b5; }
.boxed { width: 16px; height: 16px; border: 1px solid #3b78b5; font-weight: 600; line-height: 14px; }
.bold { font-weight: 700; }
.ital { font: italic 700 14px "Liberation Serif", serif; }
.under { font-weight: 600; text-decoration: underline; }
.strike { font-size: 11px; text-decoration: line-through; }
.script { font-size: 13px; }
.script sub, .script sup { font-size: 8px; line-height: 8px; color: #3b78b5; }
.script sub { align-self: flex-end; margin-bottom: 4px; }
.script sup { align-self: flex-start; margin-top: 4px; }
.effect { font-size: 15px; color: #fff; -webkit-text-stroke: 1px #3b78b5; text-shadow: 0 0 3px #8db9e4; }
.color { width: 16px; border-bottom: 4px solid #f00; font-size: 13px; font-weight: 600; line-height: 12px; }
.shade { width: 14px; height: 14px; background: #ababab; font-size: 12px; font-weight: 600; line-height: 14px; }
.ring { width: 16px; height: 16px; border: 1px solid #777; border-radius: 50%; font-size: 10px; line-height: 13px; }
.svg-ab { font: 600 9px "Noto Sans", sans-serif; fill: #555; }
.svg-a { font: 14px "Noto Sans", sans-serif; fill: #555; }

.styles .group-body { padding: 3px 8px 8px 5px; }
.gallery { flex: 1; display: flex; min-width: 0; border: 1px solid #ababab; background: #fff; }
.gallery-items { flex: 1; min-width: 0; display: flex; overflow: hidden; }
.style { width: 72px; flex-direction: column; justify-content: flex-start; border: 4px solid transparent; }
.style.picked { border-color: #c5c5c5; }
.pv { width: 58px; height: 32px; overflow: hidden; text-align: left; color: #000; line-height: 32px; font-family: "Liberation Serif", serif; }
.nm { display: flex; align-items: center; height: 16px; color: #666; }
.mark { width: 5px; height: 5px; margin: 3px 5px 0 0; border: solid #888; border-width: 0 1px 1px 0; }
.s1 { font-size: 18px; color: #555; }
.s2 { font: 18px/32px "Noto Sans", sans-serif; }
.s3 { font-size: 30px; font-weight: 700; line-height: 24px; }
.s4 { font-size: 26px; line-height: 26px; }
.s5 { font-size: 18px; }
.s6 { font-size: 16px; }
.s7 { font-size: 26px; font-weight: 700; line-height: 26px; }
.s8 { font: 20px/30px "Noto Sans", sans-serif; }
.s9 { font-size: 20px; font-weight: 700; }
.gallery-scroll { width: 15px; display: flex; flex-direction: column; border-left: 1px solid #ababab; }
.gallery-scroll button { flex: 1; }
.gallery-scroll button + button { border-top: 1px solid #ababab; }
.gallery-scroll .dim { background: #e1e1e1; }
.dim .caret { background: #b5b5b5; }
.more { flex-direction: column; gap: 3px; }
.more::before { content: ""; width: 7px; height: 1px; background: #666; }

.quick { height: 33px; flex: none; display: grid; grid-auto-flow: column; grid-template-columns: 48px; grid-auto-columns: 53px; justify-content: start; }
.quick button { gap: 9px; }
.quick .undo { padding-left: 14px; }
.faint .caret { background: #fff; }

.work { flex: 1; min-height: 0; display: flex; }
.nav { width: 269px; flex: none; display: flex; flex-direction: column; min-height: 0; position: relative; }
.nav::after { content: ""; position: absolute; right: 0; top: 4px; bottom: 3px; width: 1px; background: #bababa; }
.nav-head { display: flex; align-items: center; height: 49px; padding: 6px 9px 0 13px; }
.nav-head h2 { flex: 1; font-size: 20px; line-height: 28px; font-weight: 400; color: #2b579a; padding-top: 2px; }
.nav-head button { width: 18px; height: 18px; margin-bottom: 6px; }
.search { display: flex; align-items: center; height: 24px; margin: 0 19px 0 13px; padding-right: 4px; gap: 7px; background: #fff; border: 1px solid #ababab; }
.search input { flex: 1; min-width: 0; border: 0; padding: 0 2px; font: inherit; background: none; outline: 0; }
.search input::placeholder { color: #666; opacity: 1; }
.nav-tabs { display: flex; height: 47px; padding: 16px 0 11px 2px; }
.nav-tabs button { width: 49px; border-right: 1px solid #dedede; }
.nav-tabs button:last-child { border: 0; }
.nav-tabs .active { color: #2b579a; font-weight: 700; }
.pages { flex: 1; min-height: 0; overflow: hidden; display: flex; flex-direction: column; align-items: center; padding-right: 18px; }
.thumb { flex: none; width: 115px; height: 163px; background: #fff; border: 1px solid #9da4ae; }
.thumb.cut { height: 28px; border-top: 0; }
.thumb.current { outline: 2px solid #2b5f9e; }
.no { flex: none; margin: 2px 0 22px; height: 20px; line-height: 20px; font-size: 13px; }
.no.sel { color: #2b579a; }
.thumb path.t, .thumb path.h, .thumb path.r, .thumb path.g { fill: none; stroke-width: 2; stroke-dasharray: 2 1 3 1 1 1; stroke: #777; }
.thumb path.h { stroke: #111; stroke-dasharray: 5 1; }
.thumb path.r { stroke: #f44; stroke-dasharray: 4 1; }
.thumb path.g { stroke: #aaa; stroke-width: 1; }

.gutter { width: 28px; flex: none; display: flex; flex-direction: column; align-items: flex-start; padding: 2px 0 0; overflow: hidden; }
.corner { flex: none; width: 28px; height: 27px; border: 3px solid #d5d5d5; padding: 9px 0 0 8px; background: #fafafa; }
.corner i { display: block; width: 8px; height: 8px; border: solid #666; border-width: 0 0 2px 2px; }
.vruler { flex: 1; min-height: 0; width: 17px; margin: 3px 0 0 5px; background: #fff; overflow: hidden; }
.vruler-end { flex: none; width: 17px; height: 5px; margin-left: 5px; background: #c6c6c6; }
.ticks { display: flex; flex: none; font: 10px/16px "Liberation Sans", sans-serif; color: #333; }
.ticks span { flex: 1 1 0; min-width: 0; min-height: 0; display: grid; grid-template-columns: repeat(4, minmax(0, 1fr)); }
.ticks i { display: flex; align-items: center; justify-content: center; font-style: normal; min-width: 0; min-height: 0; }
.ticks > i { flex: 0 0 8px; }
.ticks b { font-weight: 400; }
.tick::before { content: ""; flex: none; width: 1px; height: 6px; background: #333; }
.dot::before { content: ""; flex: none; width: 1px; height: 2px; background: #333; }
.vruler .ticks { flex-direction: column; height: 786px; margin-top: 6px; }
.vruler .ticks span { grid-template: repeat(4, minmax(0, 1fr)) / 17px; }
.vruler .tick::before { width: 6px; height: 1px; }
.vruler .dot::before { width: 2px; height: 1px; }
.vruler b { writing-mode: vertical-rl; transform: rotate(180deg); }

.canvas { flex: 1; min-width: 0; overflow: hidden; display: flex; flex-direction: column; align-items: center; padding: 7px 0 0 2px; }
.hruler { flex: none; position: relative; display: flex; width: 710px; height: 16px; margin-bottom: 9px; }
.zone { overflow: hidden; display: flex; height: 16px; }
.zone.left { width: 105px; background: #c6c6c6; justify-content: flex-end; padding-right: 4px; }
.zone.left .ticks { width: 101px; }
.zone.body { flex: 1; padding-left: 4px; background: linear-gradient(to right, #fff 494px, #e6e6e6 494px 496px, #c6c6c6 496px); }
.zone.body .ticks { width: 599px; }
.indent, .indent-right { position: absolute; left: 100px; top: -3px; }
.indent-right { left: 596px; top: 9px; }

.sheet { flex: none; position: relative; width: 710px; padding: 12px 106px 60px 105px; background: #fff; border: solid #c6c6c6; border-width: 0 1px; color: #000; font: 14px/23px "Liberation Serif", "Noto Sans CJK SC", serif; }
.ln { display: block; white-space: nowrap; text-align: justify; text-align-last: justify; }
.ln.in { padding-left: 29px; }
.ln.end { text-align-last: left; }
.cjk { font-family: "Noto Sans CJK SC", sans-serif; }
.half { font-family: "Noto Sans CJK SC", sans-serif; font-feature-settings: "halt"; }
.sheet em { font-style: normal; color: #f00; }
.sheet sup { font-size: 9px; line-height: 9px; }
.blank { height: 83px; padding-top: 24px; }
.cursor { display: block; width: 1px; height: 16px; background: #000; }
.ibeam { margin: 7px 0 0 1px; }
.caption { padding-top: 18px; text-align: center; font: 11px/15px "Noto Sans", "Noto Sans CJK SC", sans-serif; padding-right: 18px; color: #555; }
.caption b { color: #000; }
.formula { text-align: center; font-size: 14px; line-height: 17px; }
.list { line-height: 16px; }
.grid { width: 405px; margin: 67px auto 0; border-collapse: collapse; table-layout: fixed; font: inherit; }
.grid th, .grid td { height: 49px; padding: 0; border: 1px solid #000; text-align: center; }
.crops { display: flex; justify-content: space-between; margin: 7px -21px 0; }
.crops i { width: 20px; height: 12px; border: solid #ababab; border-width: 1px 1px 0 0; }
.crops i + i { border-width: 1px 0 0 1px; }
.ime { position: absolute; left: 520px; top: 745px; display: flex; align-items: center; justify-content: center; gap: 4px; width: 62px; height: 27px; border: 1px solid #999; border-radius: 5px; background: #fff; box-shadow: 1px 2px 3px #888; color: #444; font: 12px/16px "Noto Sans", "Noto Sans CJK SC", sans-serif; }

.scroll { flex: none; width: 14px; display: flex; flex-direction: column; padding: 4px 0 2px; }
.scroll button { height: 15px; border: 1px solid #ababab; border-right: 0; background: #fff; }
.scroll .caret { width: 7px; height: 4px; }
.above, .below { background: #dbdbdb; }
.above { flex: 474; }
.below { flex: 271; }
.bar { height: 50px; border: 1px solid #ababab; border-right: 0; background: #fff; }

.status { flex: none; height: 19px; display: flex; align-items: center; padding-left: 6px; background: #f1f1f1; border-top: 1px solid #c6c6c6; white-space: nowrap; }
.st1 { width: 61px; }
.st2 { width: 42px; }
.st3 { width: 116px; }
.st4 { width: 75px; }
.st5 { width: 74px; }
.st6 { width: 74px; }
.st7 { width: 41px; }
.views { margin-left: auto; display: flex; height: 100%; }
.views button { width: 38px; }
.zoom { display: flex; align-items: center; width: 192px; padding-left: 5px; }
.zoom input { width: 101px; height: 12px; margin: 0 4px; appearance: none; background: linear-gradient(#999, #999) center / 100% 1px no-repeat; }
.zoom input::-webkit-slider-thumb { appearance: none; width: 4px; height: 11px; background: #555; }
.pct { margin-left: 15px; }

.arrow { position: absolute; fill: #f00; stroke: #a33; stroke-width: 0.5; filter: drop-shadow(3px 3px 2px #666); }
.arrow.one { left: 709px; top: 137px; }
.arrow.two { left: 632px; top: 413px; }
.brand { position: absolute; right: 11px; bottom: 8px; display: flex; gap: 2px; opacity: 0.85; }
.brand div { display: flex; flex-direction: column; }
.brand b { font: 700 21px/26px "Noto Sans CJK SC", sans-serif; color: #4c86c6; }
.brand a { font: 16px/16px "Noto Sans", sans-serif; color: #5fb95f; text-decoration: none; }
```
FILE: rulers.js
```js
// Fill the rulers: one unit is a half tick, a dot, the number and a dot.
function unit(n) {
  return '<span><i class="tick"></i><i class="dot"></i><i><b>' + n + '</b></i><i class="dot"></i></span>';
}

function fill(id, numbers, before, after) {
  document.getElementById(id).innerHTML =
    '<div class="ticks">' + before + numbers.map(unit).join('') + after + '</div>';
}

function range(from, to) {
  const out = [];
  for (let n = from; n <= to; n++) out.push(n);
  return out;
}

fill('hbody', range(1, 17), '<i class="dot"></i>', '<i class="tick"></i><i class="dot"></i>');
fill('vruler', range(2, 24), '', '<i class="tick"></i>');

// The margin side counts down towards the text edge.
document.getElementById('hleft').innerHTML = '<div class="ticks">' +
  [3, 2, 1].map(function (n) {
    return '<span><i><b>' + n + '</b></i><i class="dot"></i><i class="tick"></i><i class="dot"></i></span>';
  }).join('') + '</div>';
```
